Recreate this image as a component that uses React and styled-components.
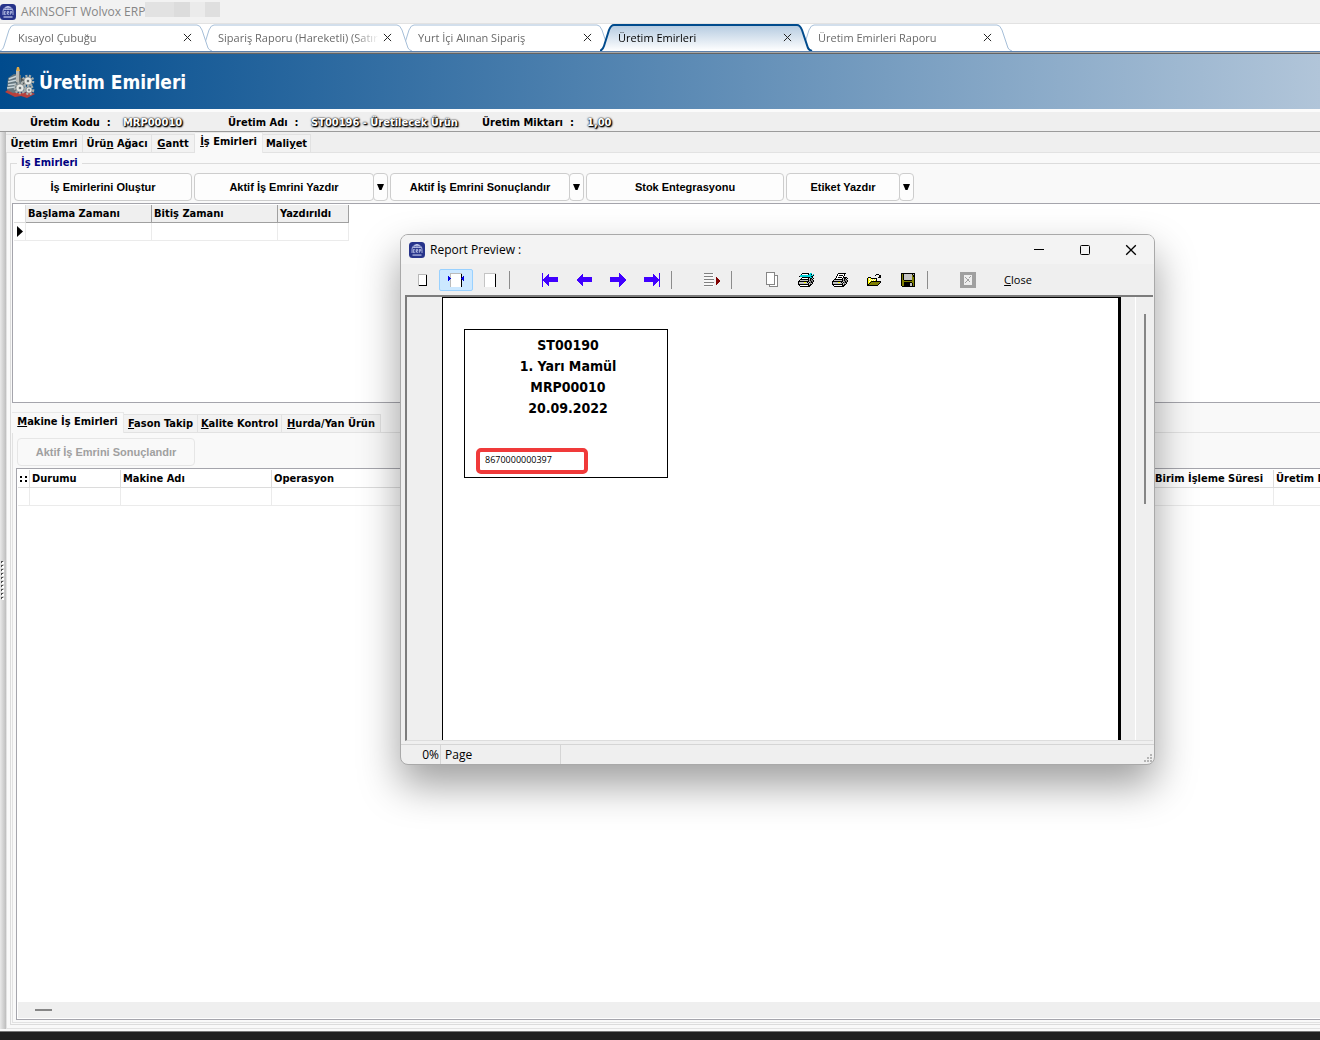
import React from "react";
import styled, { createGlobalStyle, css } from "styled-components";

const ui = '"Open Sans", "Noto Sans", sans-serif';
const bold = '"DejaVu Sans Condensed", "Noto Sans", sans-serif';
const arial = '"Liberation Sans", Arial, sans-serif';

const Global = createGlobalStyle`
  *, *::before, *::after { box-sizing: border-box; }
  html, body, #root { height: 100%; }
  body { margin: 0; background: #f9f9f9; overflow: hidden; color: #000; font: 12px ${ui}; }
  button { font: inherit; color: inherit; background: none; border: 0; padding: 0; margin: 0; }
  svg { display: block; flex: none; }
`;

const Shell = styled.div`
  display: flex;
  flex-direction: column;
  height: 100vh;
  overflow: hidden;
  position: relative;
`;

/* ---------- application title ---------- */
const AppTitle = styled.header`
  display: flex;
  align-items: center;
  gap: 5px;
  height: 24px;
  flex: none;
  background: #f2f2f2;
  border-bottom: 1px solid #e2e2e2;
  color: #868686;
  line-height: 22px;
`;
const AppName = styled.span`
  min-width: 118px;
  white-space: nowrap;
`;
const Redacted = styled.span`
  align-self: flex-start;
  width: 75px;
  height: 15px;
  margin: 2px 0 0 -5px;
  background: linear-gradient(90deg, #e2e2e2 0 29px, #dcdcdc 29px 45px, #ebebeb 45px 60px, #dfdfdf 60px);
`;

/* ---------- document tabs ---------- */
const DocTabs = styled.nav`
  display: flex;
  height: 27px;
  flex: none;
  background: #fff;
  isolation: isolate;
  font-size: 11px;
`;
const DocTab = styled.div`
  position: relative;
  z-index: ${(p) => p.$order};
  display: flex;
  align-items: center;
  width: 213px;
  margin-right: -13px;
  padding: 0 18px;
  color: ${(p) => (p.$active ? "#000" : "#6a6a6a")};
`;
const TabShape = styled.svg`
  position: absolute;
  inset: 0;
  z-index: -1;
`;
const DocLabel = styled.button`
  flex: 1;
  min-width: 0;
  overflow: hidden;
  white-space: nowrap;
  text-align: left;
  line-height: 20px;
  mask-image: linear-gradient(90deg, #000 calc(100% - 24px), transparent);
`;
const TabClose = styled.button`
  display: grid;
  place-items: center;
  width: 16px;
  height: 16px;
`;
const TabRule = styled.div`
  height: 3px;
  flex: none;
  background: linear-gradient(#5b80ac 0 1px, #a9a9a9 1px 2px, #646464 2px);
`;

/* ---------- page heading ---------- */
const Banner = styled.div`
  display: flex;
  align-items: center;
  gap: 4px;
  height: 55px;
  flex: none;
  padding-left: 5px;
  background: linear-gradient(90deg, #004b8d, #b1c5d9);
`;
const BannerTitle = styled.h1`
  margin: 0;
  color: #fff;
  font: bold 19px/28px ${bold};
`;
const Facts = styled.dl`
  display: flex;
  align-items: center;
  height: 23px;
  flex: none;
  margin: 0;
  padding: 2px 0 0 30px;
  background: #efefef;
  border-top: 3px solid #fbfbfb;
  border-bottom: 1px solid #9b9b9b;
  font: bold 11px/18px ${bold};
  white-space: pre;
`;
const FactName = styled.dt`
  width: ${(p) => p.$w}px;
`;
const FactValue = styled.dd`
  width: ${(p) => p.$w}px;
  margin: 0;
  color: #fff;
  text-shadow: 1px 1px 1px #000, 1px 1px 2px #000, 0 0 2px #333, 0 0 1px #333;
`;

/* ---------- work area ---------- */
const Work = styled.main`
  display: flex;
  flex: 1;
  min-height: 0;
  padding-bottom: 2px;
`;
const Splitter = styled.div`
  display: flex;
  flex-direction: column;
  justify-content: center;
  align-items: flex-start;
  width: 6px;
  flex: none;
  background: linear-gradient(90deg, #e9e9e9, #bdbdbd);
`;
const Pane = styled.div`
  display: flex;
  flex-direction: column;
  flex: 1;
  min-width: 0;
  min-height: 0;
  padding-top: ${(p) => p.$top || 0}px;
`;
const TabStrip = styled.div`
  display: flex;
  align-items: flex-end;
  height: 21px;
  flex: none;
  background: ${(p) => p.$bg};
  border-bottom: 1px solid #e2e2e2;
`;
const Tab = styled.button`
  width: ${(p) => p.$w}px;
  height: 18px;
  padding-top: 1px;
  background: #f2f2f2;
  border: 1px solid #e2e2e2;
  border-width: 1px 1px 0 0;
  font: bold 11px/16px ${bold};
  white-space: nowrap;
  ${(p) =>
    p.$active &&
    css`
      height: 21px;
      margin-bottom: -1px;
      padding-bottom: 3px;
      background: #f9f9f9;
      border-color: #e8e8e8;
    `}
`;
const TabPage = styled.section`
  display: flex;
  flex-direction: column;
  flex: 1;
  min-height: 0;
  padding: ${(p) => p.$pad};
  border: 1px solid #e2e2e2;
  border-width: 0 0 1px 1px;
  background: #f9f9f9;
`;
const Group = styled.fieldset`
  display: flex;
  flex-direction: column;
  flex: 1;
  min-width: 0;
  min-height: 0;
  margin: 0;
  padding: 2px 0 1px 1px;
  border: 1px solid #dcdcdc;
  border-right: 0;
`;
const GroupTitle = styled.legend`
  margin-left: 5px;
  padding: 0 4px;
  color: #00007f;
  font: bold 11px/16px ${bold};
`;
const Actions = styled.div`
  display: flex;
  gap: 2px;
  height: 28px;
  flex: none;
  margin: ${(p) => p.$margin};
`;
const face = css`
  height: 28px;
  background: #fdfdfd;
  border: 1px solid #cdcdcd;
  border-radius: 4px;
`;
const Action = styled.button`
  ${face}
  width: ${(p) => p.$w}px;
  font: bold 11px/26px ${arial};
  &:disabled {
    color: #a0a0a0;
    background: #f9f9f9;
    border-color: #e6e6e6;
  }
`;
const Split = styled.div`
  display: flex;
`;
const Drop = styled.button`
  ${face}
  display: grid;
  place-items: center;
  width: 15px;
  margin-left: -1px;
`;
const GridBox = styled.div`
  display: flex;
  flex-direction: column;
  overflow: hidden;
  padding: 1px 0 0 1px;
  border: 1px solid #a5a5ac;
  border-right: 0;
  background: #fff;
  ${(p) => (p.$h ? `height: ${p.$h}px; flex: none;` : "flex: 1; min-height: 0;")}
`;
const Table = styled.table`
  width: ${(p) => p.$w}px;
  flex: none;
  table-layout: fixed;
  border-collapse: separate;
  border-spacing: 0;
  font: bold 11px/16px ${bold};
  text-align: left;
  white-space: nowrap;
`;
const Col = styled.col`
  width: ${(p) => p.$w}px;
`;
const Head = styled.th`
  height: 18px;
  padding: 1px 2px 0;
  overflow: hidden;
  border: solid ${(p) => (p.$raised ? "#a0a0a0" : "#dcdcdc")};
  border-width: 0 1px 1px 0;
  background: ${(p) => (p.$raised ? "#efefef" : "#fff")};
`;
const Cell = styled.td`
  height: 18px;
  padding: 0 0 0 3px;
  border: solid #ebebeb;
  border-width: 0 1px 1px 0;
`;
const HScroll = styled.div`
  display: flex;
  align-items: center;
  height: 16px;
  flex: none;
  margin: auto 0 1px;
  padding-left: 17px;
  background: #efefef;
`;
const HThumb = styled.div`
  width: 17px;
  height: 2px;
  background: #868686;
`;
const Taskbar = styled.footer`
  height: 9px;
  flex: none;
  border-top: 1px solid #777;
  background: #202020;
`;

/* ---------- report preview window ---------- */
const Dialog = styled.section`
  position: absolute;
  left: 400px;
  top: 234px;
  display: flex;
  flex-direction: column;
  width: 755px;
  height: 531px;
  overflow: hidden;
  border: 1px solid #a9a9a9;
  border-radius: 8px;
  background: #efefef;
  box-shadow: 0 20px 40px rgba(0, 0, 0, 0.38);
`;
const DialogBar = styled.header`
  display: flex;
  align-items: center;
  height: 29px;
  flex: none;
  padding-left: 8px;
  background: #f3f3f3;
`;
const DialogTitle = styled.h2`
  flex: 1;
  margin: 0 0 0 5px;
  font: 12px/20px ${ui};
`;
const Caption = styled.button`
  display: grid;
  place-items: center;
  width: 46px;
  height: 28px;
`;
const Tools = styled.div`
  display: flex;
  align-items: center;
  height: 31px;
  flex: none;
  padding-left: 4px;
`;
const Tool = styled.button`
  display: grid;
  place-items: center;
  width: 34px;
  height: 22px;
  border: 1px solid ${(p) => (p.$on ? "#99d1ff" : "transparent")};
  border-radius: 2px;
  background: ${(p) => (p.$on ? "#cce8ff" : "transparent")};
`;
const Divider = styled.span`
  width: 26px;
  height: 18px;
  background: linear-gradient(#8c8c8c, #8c8c8c) 2px 0 / 1px 100% no-repeat;
`;
const CloseTool = styled.button`
  width: 66px;
  height: 22px;
  font: 11px/20px ${ui};
`;
const Viewer = styled.div`
  display: flex;
  flex: 1;
  min-height: 0;
  margin: 0 1px 0 4px;
  padding-left: 35px;
  border: solid;
  border-width: 2px 0 1px 2px;
  border-color: #7c7c7c #ddd #ddd #7c7c7c;
`;
const Paper = styled.div`
  flex: 1;
  padding: 31px 0 0 21px;
  border: solid #000;
  border-width: 1px 3px 0 1px;
  background: #fff;
`;
const Ticket = styled.article`
  width: 204px;
  height: 149px;
  padding-top: 5px;
  border: 1px solid #000;
`;
const TicketLine = styled.p`
  margin: 0;
  padding-left: 4px;
  font: bold 14px/21px ${bold};
  text-align: center;
`;
const Barcode = styled.p`
  width: 112px;
  height: 26px;
  margin: 29px 0 0 11px;
  padding-left: 5px;
  border: 4px solid #f03a3a;
  border-radius: 5px;
  font: 9px/16px ${ui};
`;
const VScroll = styled.div`
  display: flex;
  justify-content: center;
  width: 18px;
  margin-left: 14px;
  padding-top: 17px;
  border-left: 1px solid #fff;
`;
const VThumb = styled.div`
  width: 2px;
  height: 190px;
  background: #868686;
`;
const StatusBar = styled.footer`
  display: flex;
  align-items: center;
  height: 20px;
  flex: none;
  margin-top: 3px;
  border-top: 1px solid #d5d5d5;
  line-height: 18px;
`;
const StatusCell = styled.span`
  width: ${(p) => p.$w}px;
  padding: 1px 1px 0 4px;
  border-right: 1px solid #d5d5d5;
  text-align: ${(p) => p.$align || "left"};
`;
const Grip = styled.svg`
  align-self: flex-end;
  margin-left: auto;
`;

/* ---------- drawings ---------- */
const Logo = () => (
  <svg width="16" height="16" viewBox="0 0 16 16" aria-hidden="true">
    <rect width="16" height="16" rx="3.5" fill="#27348b" />
    <g fill="none" stroke="#c8cff0" strokeWidth=".8">
      <path d="M3 11V7.500a5 5 0 0 1 10 0V11M3.500 5.500h9M5.200 3.800h5.600M8 2.500v3M5.500 5.500C5.800 4 6.500 3 8 2.500c1.500.5 2.200 1.500 2.500 3" />
      <path d="M5.800 7.400H4.300v3.200h1.500M4.300 9h1.300M7.200 10.800V7.400h1.400v1.500H7.200l1.600 1.900M10.300 10.800V7.400h1.500v1.600h-1.500" />
      <path d="M3.500 13h9" strokeWidth="1.200" />
    </g>
  </svg>
);

const Gear = ({ x, y, r }) => (
  <g transform={`translate(${x} ${y})`}>
    <circle r={r} fill="none" stroke="#a9aeac" strokeWidth="2.600" strokeDasharray="2 1.400" />
    <circle r={r - 1} fill="#e6e8e4" stroke="#7d8384" strokeWidth=".6" />
    <circle r={r / 2.800} fill="#6e7678" stroke="#fff" strokeWidth=".6" />
  </g>
);
const Factory = () => (
  <svg width="30" height="32" viewBox="0 0 30 32" aria-hidden="true">
    <path d="M0 26l4-3 8 4 14-1 4 2-8 4-6-2-6 1z" fill="#b8403c" />
    <path d="M2 24l1-12 6-4 7 1v17l-8 1z" fill="#65767e" />
    <path d="M4 13l8-3M3 16l9-2M3 19l8-1M2 22l8-1" stroke="#c9d5da" strokeWidth="1.400" />
    <path d="M11 4h4v12h-4z" fill="#b9bbb7" />
    <path d="M14 4h1v12h-1z" fill="#6b7173" />
    <path d="M11 5l1-4h2l1 4z" fill="#e0a948" />
    <path d="M16 12h4v8h-4z" fill="#4a5254" />
    <Gear x={23} y={15} r={5} />
    <Gear x={15} y={22} r={5} />
    <Gear x={24} y={24} r={4} />
  </svg>
);

const Cross = ({ size, color = "#222" }) => (
  <svg width={size} height={size} viewBox="0 0 10 10" aria-hidden="true">
    <path d="M1 1l8 8M9 1l-8 8" stroke={color} strokeWidth="1.100" />
  </svg>
);

const shape = "M0 27C2 26 3 25 4 22L9 6Q11 1 14 1H197Q200 1 202 6L208 24Q209 26 212 27";
const Outline = ({ active }) => (
  <TabShape width="213" height="27" viewBox="0 0 213 27" aria-hidden="true">
    <defs>
      <linearGradient id="tabFill" x2="0" y2="1">
        <stop offset="0" stopColor="#b4cae0" />
        <stop offset="1" stopColor="#fff" />
      </linearGradient>
    </defs>
    <path d={shape} fill={active ? "url(#tabFill)" : "#fff"} stroke={active ? "#004b8d" : "#a6bfd9"} strokeWidth={active ? 2 : 1} />
  </TabShape>
);

const Down = () => (
  <svg width="7" height="6" viewBox="0 0 7 6" aria-hidden="true">
    <path d="M0 0h7L4.500 6h-2z" />
  </svg>
);
const Pointer = () => (
  <svg width="6" height="11" viewBox="0 0 6 11" aria-hidden="true">
    <path d="M0 0l6 5.500L0 11z" />
  </svg>
);
const Dots = () => (
  <svg width="6" height="39" viewBox="0 0 6 39" shapeRendering="crispEdges" aria-hidden="true">
    {Array.from({ length: 10 }, (_, i) => (
      <g key={i}>
        <rect x="2" y={i * 4 + 1} width="2" height="2" fill="#fff" />
        <path d={`M1 ${i * 4}h2v1h-1v1h-1z`} fill="#4d4d4d" />
      </g>
    ))}
  </svg>
);

const Px = ({ children, w = 16, h = 16 }) => (
  <svg width={w} height={h} viewBox={`0 0 ${w} ${h}`} shapeRendering="crispEdges" aria-hidden="true">
    {children}
  </svg>
);

/* Small bitmap icons: one letter per pixel. */
const palette = { k: "#000", w: "#fff", g: "#868686", s: "#c3c3c3", y: "#ffff00", o: "#808000", c: "#00d0d8" };
const Bitmap = ({ rows }) => (
  <Px w={rows[0].length} h={rows.length}>
    {rows.flatMap((row, y) =>
      [...row].map((ch, x) => (palette[ch] ? <rect key={`${x}.${y}`} x={x} y={y} width="1" height="1" fill={palette[ch]} /> : null))
    )}
  </Px>
);
const printerBody = [
  "...kwwwwwwkskksk",
  "..kkkkkkkkkskgk.",
  ".ksssssssskgkggk",
  "kkkkkkkkkkksgkgk",
  "ksssssyyskskgkk.",
  "ksssssssssksgsk.",
  "kkkkkkkkkkkskk..",
  ".kwwwwwwwwkkk...",
  "..kkkkkkkkkk....",
];
const printer = [
  "......kkkkkkkk..",
  ".....kwwwwwwk...",
  ".....kwkkkkwk...",
  "....kwwwwwwk....",
  "....kwkkkkwkkkk.",
  ...printerBody,
];
const printerSetup = [
  "....kkkkkkk.cc..",
  "...kwwwwwwkcck.c",
  "..ccccccccccccck",
  ".kccccccccccckk.",
  "....kkkkkkkkcck.",
  ...printerBody,
];
const folder = [
  ".........kkk..",
  "........k...kk",
  "............kk",
  ".kkk.......kkk",
  "kywykkkkkk....",
  "kywywywywk....",
  "kyywywywyk....",
  "kywykkkkkkkkkk",
  "kyykoooooooook",
  "kykoooooooook.",
  "kkoooooooook..",
  "kkkkkkkkkkk...",
];
const floppy = [
  "kkkkkkkkkkkkkk",
  "kokssssssssksk",
  "kokssssssssokk",
  "kokssssssssokk",
  "kokssssssssook",
  "kokssssssssook",
  "kokssssssssook",
  "kookkkkkkkkook",
  "kooooooooooook",
  "kookkkkkkkkook",
  "kookkkkkksskok",
  "kookkkkkksskok",
  "kookkkkkksskok",
  ".kkkkkkkkkkkkk",
];

const icons = {
  whole: (
    <Px w={9} h={12}>
      <path d="M0 0h9v12H0z" fill="#b9b9b9" />
      <path d="M1 1h7v10H1z" fill="#fff" />
      <path d="M8 1h1v11H1v-1h7z" />
    </Px>
  ),
  width: (
    <Px w={16} h={14}>
      <path d="M2 0h12v14H2z" fill="#bbb" />
      <path d="M3 1h10v13H3z" fill="#fff" />
      <path d="M13 1h1v13h-1z" />
      <path d="M0 3h1v1h1v1h1v1H2v1H1v1H0zM16 3h-1v1h-1v1h-1v1h1v1h1v1h1z" fill="#0000e0" />
    </Px>
  ),
  full: (
    <Px w={12} h={14}>
      <path d="M0 0h12v14H0z" fill="#c4c4c4" />
      <path d="M1 1h10v13H1z" fill="#fff" />
      <path d="M11 1h1v13h-1z" />
    </Px>
  ),
  first: (
    <Px w={16} h={14}>
      <path d="M0 0h1v14H0zM1 7l6-7v4h9v5H7v5z" fill="#4000ff" />
    </Px>
  ),
  prev: (
    <Px w={16} h={14}>
      <path d="M0 7l7-7v4h9v5H7v5z" fill="#4000ff" />
    </Px>
  ),
  next: (
    <Px w={16} h={14}>
      <path d="M16 7L9 0v4H0v5h9v5z" fill="#4000ff" />
    </Px>
  ),
  last: (
    <Px w={16} h={14}>
      <path d="M15 0h1v14h-1zM15 7L9 0v4H0v5h9v5z" fill="#4000ff" />
    </Px>
  ),
  list: (
    <Px w={16} h={14}>
      <path d="M0 0h10v14H0z" fill="#f8f8f8" />
      <path d="M0 0h9v1H0zM0 3h9v1H0zM0 6h10v1H0zM0 9h10v1H0zM0 12h9v1H0z" fill="#808080" />
      <path d="M12 4l4 4-4 4z" fill="#800000" />
    </Px>
  ),
  copy: (
    <Px w={12} h={15}>
      <path d="M3 3h9v12H3z" fill="#868686" />
      <path d="M4 4h7v10H4z" fill="#fff" />
      <path d="M0 0h9v13H0z" fill="#868686" />
      <path d="M1 1h7v11H1z" fill="#fff" />
    </Px>
  ),
  setup: <Bitmap rows={printerSetup} />,
  print: <Bitmap rows={printer} />,
  open: <Bitmap rows={folder} />,
  save: <Bitmap rows={floppy} />,
  stop: (
    <Px>
      <path d="M0 0h16v16H0z" fill="#a0a0a0" />
      <path d="M4 3h8v10H4z" fill="#eee" />
      <path d="M5 5h1v1H5zM6 6h1v1H6zM7 7h1v1H7zM8 8h1v1H8zM9 9h1v1H9zM10 4h1v1h-1zM9 5h1v1H9zM8 7h1v1H8zM7 8h1v1H7zM6 9h1v1H6zM5 10h1v1H5z" fill="#a0a0a0" />
    </Px>
  ),
};

const tools = [
  ["whole", "Whole page"], ["width", "Page width"], ["full", "Actual size"], null,
  ["first", "First page"], ["prev", "Previous page"], ["next", "Next page"], ["last", "Last page"], null,
  ["list", "Go to page"], null,
  ["copy", "Copy"], ["setup", "Printer setup"], ["print", "Print"], ["open", "Open"], ["save", "Save"], null,
  ["stop", "Stop"],
];

const Key = ({ text, at }) => (
  <>
    {text.slice(0, at)}
    <u>{text[at]}</u>
    {text.slice(at + 1)}
  </>
);

const docs = ["Kısayol Çubuğu", "Sipariş Raporu (Hareketli) (Satır", "Yurt İçi Alınan Sipariş", "Üretim Emirleri", "Üretim Emirleri Raporu"];
const pageTabs = [["Üretim Emri", 1, 77], ["Ürün Ağacı", 3, 69], ["Gantt", 0, 43], ["İş Emirleri", 0, 68], ["Maliyet", 4, 48]];
const orderTabs = [["Makine İş Emirleri", 0, 112], ["Fason Takip", 0, 74], ["Kalite Kontrol", 0, 84], ["Hurda/Yan Ürün", 0, 99]];

const Tabs = ({ items, current, bg }) => (
  <TabStrip role="tablist" $bg={bg}>
    {items.map(([text, at, w], i) => (
      <Tab key={text} role="tab" aria-selected={i === current} $active={i === current} $w={w}>
        <Key text={text} at={at} />
      </Tab>
    ))}
  </TabStrip>
);

const SplitAction = ({ w, children }) => (
  <Split>
    <Action $w={w}>{children}</Action>
    <Drop aria-label="Seçenekler"><Down /></Drop>
  </Split>
);

const Grid = ({ cols, corner, marker, raised }) => (
  <Table $w={cols.reduce((sum, c) => sum + c[1], 12)}>
    <colgroup>
      <Col $w={12} />
      {cols.map(([name, w]) => <Col key={name} $w={w} />)}
    </colgroup>
    <thead>
      <tr>
        <Head>{corner}</Head>
        {cols.map(([name]) => <Head key={name} scope="col" $raised={raised}>{name}</Head>)}
      </tr>
    </thead>
    <tbody>
      <tr>
        <Cell>{marker}</Cell>
        {cols.map(([name]) => <Cell key={name} />)}
      </tr>
    </tbody>
  </Table>
);

const Corner = () => (
  <Px w={7} h={6}>
    <path d="M0 0h2v2H0zM5 0h2v2H5zM0 4h2v2H0zM5 4h2v2H5z" />
  </Px>
);

const Preview = () => (
  <Dialog role="dialog" aria-labelledby="preview-title">
    <DialogBar>
      <Logo />
      <DialogTitle id="preview-title">Report Preview :</DialogTitle>
      <Caption aria-label="Minimize"><Px w={10} h={1}><path d="M0 0h10v1H0z" /></Px></Caption>
      <Caption aria-label="Maximize">
        <svg width="10" height="10" viewBox="0 0 10 10"><rect x=".5" y=".5" width="9" height="9" rx="1" fill="none" stroke="#000" /></svg>
      </Caption>
      <Caption aria-label="Close window"><Cross size={12} color="#000" /></Caption>
    </DialogBar>
    <Tools role="toolbar">
      {tools.map((t, i) => (t ? <Tool key={t[0]} aria-label={t[1]} $on={t[0] === "width"}>{icons[t[0]]}</Tool> : <Divider key={i} />))}
      <CloseTool><Key text="Close" at={0} /></CloseTool>
    </Tools>
    <Viewer>
      <Paper>
        <Ticket>
          <TicketLine>ST00190</TicketLine>
          <TicketLine>1. Yarı Mamül</TicketLine>
          <TicketLine>MRP00010</TicketLine>
          <TicketLine>20.09.2022</TicketLine>
          <Barcode>8670000000397</Barcode>
        </Ticket>
      </Paper>
      <VScroll><VThumb /></VScroll>
    </Viewer>
    <StatusBar>
      <StatusCell $w={40} $align="right">0%</StatusCell>
      <StatusCell $w={120}>Page</StatusCell>
      <Grip width="10" height="10" viewBox="0 0 10 10" shapeRendering="crispEdges" aria-hidden="true">
        <path d="M6 0h2v2H6zM3 3h2v2H3zM6 3h2v2H6zM0 6h2v2H0zM3 6h2v2H3zM6 6h2v2H6z" fill="#b5b5b5" />
      </Grip>
    </StatusBar>
  </Dialog>
);

export default function App() {
  return (
    <Shell>
      <Global />
      <AppTitle>
        <Logo />
        <AppName>AKINSOFT Wolvox ERP</AppName>
        <Redacted />
      </AppTitle>
      <DocTabs>
        {docs.map((name, i) => (
          <DocTab key={name} $active={i === 3} $order={i === 3 ? 9 : 8 - i}>
            <Outline active={i === 3} />
            <DocLabel>{name}</DocLabel>
            <TabClose aria-label={`${name} kapat`}><Cross size={9} /></TabClose>
          </DocTab>
        ))}
      </DocTabs>
      <TabRule />
      <Banner>
        <Factory />
        <BannerTitle>Üretim Emirleri</BannerTitle>
      </Banner>
      <Facts>
        <FactName $w={93}>{"Üretim Kodu  :"}</FactName>
        <FactValue $w={105}>MRP00010</FactValue>
        <FactName $w={83}>{"Üretim Adı  :"}</FactName>
        <FactValue $w={171}>ST00196 - Üretilecek Ürün</FactValue>
        <FactName $w={105}>{"Üretim Miktarı  :"}</FactName>
        <FactValue $w={60}>1,00</FactValue>
      </Facts>
      <Work>
        <Splitter><Dots /></Splitter>
        <Pane>
          <Tabs items={pageTabs} current={3} bg="#efefef" />
          <TabPage $pad="2px 0 3px 3px">
            <Group>
              <GroupTitle>İş Emirleri</GroupTitle>
              <Actions $margin="0 0 2px 2px">
                <Action $w={178}>İş Emirlerini Oluştur</Action>
                <SplitAction w={180}>Aktif İş Emrini Yazdır</SplitAction>
                <SplitAction w={180}>Aktif İş Emrini Sonuçlandır</SplitAction>
                <Action $w={198}>Stok Entegrasyonu</Action>
                <SplitAction w={114}>Etiket Yazdır</SplitAction>
              </Actions>
              <GridBox $h={200}>
                <Grid raised marker={<Pointer />} cols={[["Başlama Zamanı", 126], ["Bitiş Zamanı", 126], ["Yazdırıldı", 71]]} />
              </GridBox>
              <Pane $top={9}>
                <Tabs items={orderTabs} current={0} bg="#f9f9f9" />
                <TabPage $pad="5px 0 2px 3px">
                  <Actions $margin="0 0 2px 1px">
                    <Action $w={178} disabled>Aktif İş Emrini Sonuçlandır</Action>
                  </Actions>
                  <GridBox>
                    <Grid corner={<Corner />} cols={[["Durumu", 91], ["Makine Adı", 151], ["Operasyon", 881], ["Birim İşleme Süresi", 121], ["Üretim Miktarı", 121]]} />
                    <HScroll><HThumb /></HScroll>
                  </GridBox>
                </TabPage>
              </Pane>
            </Group>
          </TabPage>
        </Pane>
      </Work>
      <Taskbar />
      <Preview />
    </Shell>
  );
}
